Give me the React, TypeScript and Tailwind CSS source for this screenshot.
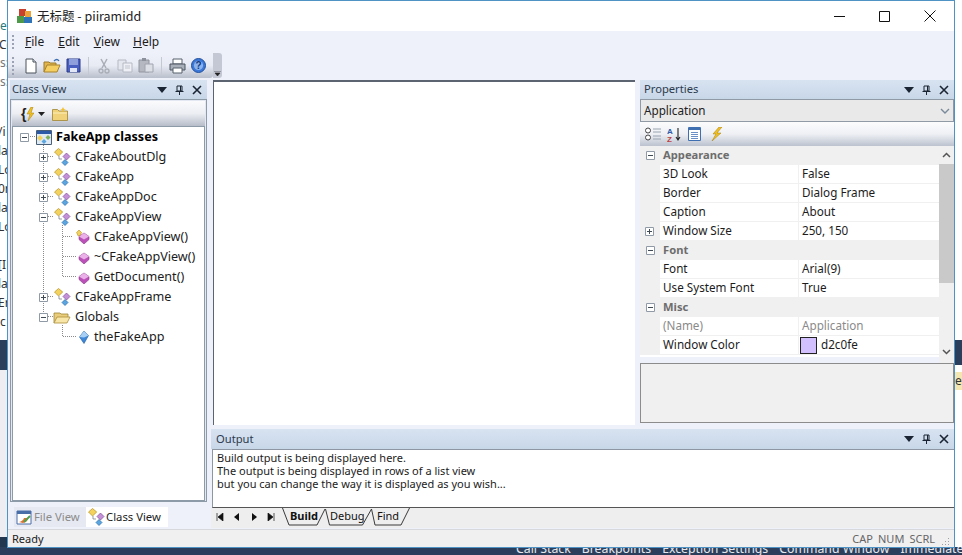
import React from "react";

const font = { fontFamily: '"Noto Sans","Noto Sans CJK SC",sans-serif' };

const CaptionButtons = () => (
  <div className="flex items-center gap-[7px] text-[#1f2d44]">
    <svg width="10" height="6" viewBox="0 0 10 6"><path d="M0 0h10L5 6z" fill="#1a2433" /></svg>
    <svg width="9" height="10" viewBox="0 0 9 10" className="ml-[1px]"><path d="M2 1h5v5H2zM0.5 6.5h8M4.5 6.5V10M5.500 1v5" fill="none" stroke="#1a2433" /></svg>
    <svg width="10" height="10" viewBox="0 0 10 10" className="ml-[1px]"><path d="M1 1l8 8M9 1l-8 8" stroke="#1a2433" strokeWidth="1.6" /></svg>
  </div>
);

const Caption = ({ title, cls }: { title: string; cls?: string }) => (
  <div className={"flex h-[19px] items-center justify-between bg-gradient-to-b from-[#d8e3f1] to-[#c8d7e8] pl-[2px] pr-[5px] text-[11.2px] text-[#2c3a4d] " + (cls ?? "")}>
    <span>{title}</span>
    <CaptionButtons />
  </div>
);

const Grip = ({ n }: { n: number }) => (
  <div className="flex w-[3px] shrink-0 flex-col gap-[2px]">
    {Array.from({ length: n }).map((_, i) => (
      <span key={i} className="h-[2px] w-[2px] bg-[#9aa2b4]" />
    ))}
  </div>
);

const Doc = () => (
  <svg width="16" height="16" viewBox="0 0 16 16"><path d="M3 1h7l3 3v11H3z" fill="#fff" stroke="#4a525c" /><path d="M10 1v3h3" fill="#dfe6ee" stroke="#4a525c" /></svg>
);
const OpenF = () => (
  <svg width="18" height="16" viewBox="0 0 18 16"><path d="M1 14V4h5l1 1h6v2" fill="#e2b64c" stroke="#9a7a2a" /><path d="M1 14l3-7h13l-3 7z" fill="#f6cf62" stroke="#a8832c" /><path d="M11 3q3-3 5 0" fill="none" stroke="#3f6fb0" strokeWidth="1.3" /></svg>
);
const Save = () => (
  <svg width="15" height="15" viewBox="0 0 15 15"><path d="M1 1h13v13H1z" fill="#4a5fc0" stroke="#2b3a86" /><path d="M3 1h9v6H3z" fill="#8f9fdc" /><path d="M4 10h7v4H4z" fill="#e3e7f5" /></svg>
);
const Cut = () => (
  <svg width="12" height="16" viewBox="0 0 12 16"><path d="M3 1l5 9M9 1l-5 9" stroke="#a9adb6" strokeWidth="1.5" /><circle cx="3" cy="13" r="2" fill="none" stroke="#a9adb6" strokeWidth="1.3" /><circle cx="9" cy="13" r="2" fill="none" stroke="#a9adb6" strokeWidth="1.3" /></svg>
);
const Copy = () => (
  <svg width="16" height="14" viewBox="0 0 16 14"><path d="M1 1h8v10H1z" fill="#e4e7ee" stroke="#b5b9c3" /><path d="M6 4h9v9H6z" fill="#eef0f5" stroke="#b5b9c3" /><path d="M8 7h5M8 9h5" stroke="#c0c4cc" /></svg>
);
const Paste = () => (
  <svg width="16" height="15" viewBox="0 0 16 15"><path d="M1 2h10v12H1z" fill="#b5b8c0" stroke="#90949e" /><path d="M4 0h4v3H4z" fill="#8d919b" /><path d="M7 6h8v8H7z" fill="#dcdfe6" stroke="#a0a4ae" /></svg>
);
const Print = () => (
  <svg width="17" height="16" viewBox="0 0 17 16"><path d="M4 1h9v5H4z" fill="#fff" stroke="#56606c" /><path d="M1 6h15v6H1z" fill="#a8afb9" stroke="#4c5560" /><path d="M4 10h9v5H4z" fill="#fff" stroke="#56606c" /></svg>
);
const Help = () => (
  <svg width="15" height="15" viewBox="0 0 15 15"><circle cx="7.5" cy="7.5" r="7" fill="#3c78d8" stroke="#20509e" /><circle cx="7.5" cy="7.5" r="4.6" fill="#8ab4ee" /><text x="7.5" y="11" textAnchor="middle" fontSize="10" fontWeight="700" fill="#123a80" fontFamily="Liberation Sans">?</text></svg>
);

const Sep = () => <div className="mx-[5px] h-[18px] w-px bg-[#c5c9d4]" />;

const Box = ({ open }: { open?: boolean }) => (
  <svg width="9" height="9" viewBox="0 0 9 9" className="shrink-0 bg-white">
    <path d="M.5.5h8v8h-8z" fill="#fff" stroke="#8f9aa6" />
    <path d={open ? "M2 4.5h5" : "M2 4.5h5M4.500 2v5"} stroke="#404a55" />
  </svg>
);

const ClassIcon = () => (
  <svg width="17" height="18" viewBox="0 0 17 18" className="shrink-0">
    <path d="M4.500 0.500l4.200 3.500-4.200 4L0.500 4z" fill="#f3d25e" stroke="#b58f20" strokeWidth=".7" />
    <path d="M12.500 5l3.500 3.500-3.500 3.500L9 8.500z" fill="#c490d8" stroke="#7f4f99" strokeWidth=".7" />
    <path d="M11 11.500l3 3-3 3-3-3z" fill="#5aa6e0" stroke="#2c6aa6" strokeWidth=".7" />
    <path d="M5 8v3h3" fill="none" stroke="#6a7480" strokeWidth=".7" />
  </svg>
);
const Method = ({ star }: { star?: boolean }) => (
  <svg width="14" height="14" viewBox="0 0 14 14" className="shrink-0">
    {star && <path d="M3 0l2.500 2.500L3.800 6H2.200L.600 2.500z" fill="#f3d25e" stroke="#b58f20" strokeWidth=".6" />}
    <path d="M8 3l5 3.500v3L8 14l-5-4.500v-3z" fill="#bb50b8" stroke="#8a3b88" strokeWidth=".6" />
    <path d="M8 3l5 3.500L8 9.500 3 6.500z" fill="#eab0e8" />
  </svg>
);
const Field = () => (
  <svg width="14" height="14" viewBox="0 0 14 14" className="shrink-0">
    <path d="M8 1l4.500 4.500L8 13.500 3.500 7z" fill="#3f88d8" stroke="#1c5a9e" strokeWidth=".6" />
    <path d="M8 1l4.500 4.500L8 7.500 3.500 7z" fill="#a8d0f4" />
  </svg>
);
const Folder = ({ w = 18 }: { w?: number }) => (
  <svg width={w} height="15" viewBox="0 0 18 15" className="shrink-0">
    <path d="M1 13V3h6l1 1h7v3" fill="#e9cd7c" stroke="#a08534" strokeWidth=".8" />
    <path d="M1 13l3-6h13l-3 6z" fill="#f8e6a8" stroke="#a98d3b" strokeWidth=".8" />
  </svg>
);
const ClosedFolder = () => (
  <svg width="16" height="14" viewBox="0 0 16 14" className="shrink-0">
    <path d="M.500 13.500v-11h5l1.500 1.500h8.500v9.500z" fill="#f0d27a" stroke="#a08534" strokeWidth=".8" />
    <path d="M1 6h14" stroke="#fbeebb" />
    <path d="M11 0l1 2 2 .5-2 .5-1 2-1-2-2-.5 2-.5z" fill="#f3c030" />
  </svg>
);
const RootIcon = () => (
  <svg width="16" height="15" viewBox="0 0 16 15" className="shrink-0">
    <path d="M.500.500h15v14H.500z" fill="#dfe9f3" stroke="#4a6078" />
    <path d="M1 1h14v3H1z" fill="#2c5aa8" />
    <path d="M4 5l3 3-3 3-3-3z" fill="#f3d25e" />
    <path d="M12 5l2.500 2.500L12 10 9.500 7.500z" fill="#7fb05a" />
    <path d="M8 9l2.500 2.500L8 14l-2.500-2.500z" fill="#5aa6e0" />
  </svg>
);

type TreeRow = { indent: number; box?: "open" | "closed"; icon: React.ReactNode; label: string; bold?: boolean };
const rows: TreeRow[] = [
  { indent: 8, box: "open", icon: <RootIcon />, label: "FakeApp classes", bold: true },
  { indent: 27, box: "closed", icon: <ClassIcon />, label: "CFakeAboutDlg" },
  { indent: 27, box: "closed", icon: <ClassIcon />, label: "CFakeApp" },
  { indent: 27, box: "closed", icon: <ClassIcon />, label: "CFakeAppDoc" },
  { indent: 27, box: "open", icon: <ClassIcon />, label: "CFakeAppView" },
  { indent: 46, icon: <Method star />, label: "CFakeAppView()" },
  { indent: 46, icon: <Method />, label: "~CFakeAppView()" },
  { indent: 46, icon: <Method />, label: "GetDocument()" },
  { indent: 27, box: "closed", icon: <ClassIcon />, label: "CFakeAppFrame" },
  { indent: 27, box: "open", icon: <Folder />, label: "Globals" },
  { indent: 46, icon: <Field />, label: "theFakeApp" },
];

const Tree = () => (
  <div className="relative min-h-0 flex-1 border border-[#8d9aa8] bg-white text-[12.6px] text-[#1c1c1c]">
    <svg className="absolute left-0 top-0" width="80" height="240" fill="none" stroke="#8a8a8a" strokeDasharray="1 1">
      <path d="M30.500 18v172M49.500 98v52M49.500 198v12" />
      <path d="M17 9.500h6M35 29.500h6M35 49.500h6M35 69.500h6M35 89.500h6M50 109.500h10M50 129.500h13M50 149.500h13M35 169.500h6M35 189.500h6M50 209.500h13" />
    </svg>
    {rows.map((r) => (
      <div key={r.label} className="relative flex h-[20px] items-center">
        <div className="flex w-[9px] shrink-0 justify-center" style={{ marginLeft: r.indent - 1 }}>
          {r.box ? <Box open={r.box === "open"} /> : null}
        </div>
        <div className="ml-[6px] flex w-[17px] shrink-0 justify-end">{r.icon}</div>
        <span className={"ml-[4px] whitespace-nowrap " + (r.bold ? "font-bold text-black" : "")}>{r.label}</span>
      </div>
    ))}
  </div>
);

const Cat = ({ label }: { label: string }) => (
  <div className="flex h-[19px] items-center bg-[#f0f0f0]">
    <div className="flex w-[23px] shrink-0 justify-center pr-[3px]"><Box open /></div>
    <span className="text-[11.2px] font-bold text-[#6d6d6d]">{label}</span>
  </div>
);
const Prop = ({ n, v, dim, plus, swatch }: { n: string; v: string; dim?: boolean; plus?: boolean; swatch?: boolean }) => (
  <div className={"flex h-[19px] items-center " + (dim ? "text-[#8a8a8a]" : "text-[#1c1c1c]")}>
    <div className="flex h-full w-[20px] shrink-0 items-center justify-center bg-[#f0f0f0] pr-[2px]">{plus && <Box />}</div>
    <div className="flex h-full w-[139px] shrink-0 items-center border-b border-r border-[#f0f0f0] pl-[3px]">{n}</div>
    <div className="flex h-full flex-1 items-center border-b border-[#f0f0f0] pl-[3px]">
      {swatch && <span className="-ml-[2px] mr-[4px] h-[17px] w-[17px] border border-[#222] bg-[#d2c0fe]" />}
      {v}
    </div>
  </div>
);

const Properties = () => (
  <div className="flex w-[314px] shrink-0 flex-col">
    <Caption title="Properties" cls="pl-[4px] pr-[4px]" />
    <div className="flex h-[23px] items-center justify-between border border-[#8f9aa6] bg-[#e9e9e9] px-[3px] text-[11.7px] text-[#222]">
      <span>Application</span>
      <svg width="10" height="6" viewBox="0 0 10 6"><path d="M1 1l4 4 4-4" fill="none" stroke="#7a8a9a" strokeWidth="1.4" /></svg>
    </div>
    <div className="flex h-[24px] items-center gap-[6px] bg-gradient-to-b from-[#fcfcfd] via-[#eef0f4] to-[#bcc3cf] pl-[5px]">
      <svg width="17" height="14" viewBox="0 0 17 14"><circle cx="3" cy="3.500" r="2.500" fill="#fff" stroke="#444" /><circle cx="3" cy="10.500" r="2.500" fill="#fff" stroke="#444" /><path d="M8 2h8M8 5h8M8 9h8M8 12h8" stroke="#9aa4b0" /></svg>
      <svg width="15" height="15" viewBox="0 0 15 15" className="-ml-[1px]"><text x="0" y="7" fontSize="8" fontWeight="700" fill="#2c5aa8" fontFamily="Liberation Sans">A</text><text x="0" y="14.500" fontSize="8" fontWeight="700" fill="#c04040" fontFamily="Liberation Sans">Z</text><path d="M11 1v12M9 10l2 3 2-3" fill="none" stroke="#222" strokeWidth="1.1" /></svg>
      <svg width="13" height="14" viewBox="0 0 13 14"><path d="M.500.500h12v13H.500z" fill="#fff" stroke="#3f6fb0" /><path d="M1 1h11v2H1z" fill="#3f6fb0" /><path d="M3 5.500h7M3 7.500h7M3 9.500h7M3 11.500h7" stroke="#6a90c8" /></svg>
      <svg width="12" height="14" viewBox="0 0 12 14" className="ml-[4px]"><path d="M8 0L2 7h3l-4 7 9-8H6l5-6z" fill="#f0c020" stroke="#a67c10" strokeWidth=".5" /></svg>
    </div>
    <div className="flex h-[217px] text-[11.7px]">
      <div className="h-[211px] flex-1 overflow-hidden bg-white">
        <Cat label="Appearance" />
        <Prop n="3D Look" v="False" />
        <Prop n="Border" v="Dialog Frame" />
        <Prop n="Caption" v="About" />
        <Prop n="Window Size" v="250, 150" plus />
        <Cat label="Font" />
        <Prop n="Font" v="Arial(9)" />
        <Prop n="Use System Font" v="True" />
        <Cat label="Misc" />
        <Prop n="(Name)" v="Application" dim />
        <Prop n="Window Color" v="d2c0fe" swatch />
      </div>
      <div className="flex w-[15px] shrink-0 flex-col items-center bg-[#f0f0f0]">
        <div className="flex h-[18px] items-center">
          <svg width="9" height="6" viewBox="0 0 9 6"><path d="M1 5l3.500-3.500L8 5" fill="none" stroke="#555" strokeWidth="1.500" /></svg>
        </div>
        <div className="h-[119px] w-full bg-[#c9c9c9]" />
        <div className="flex-1" />
        <div className="flex h-[14px] items-start">
          <svg width="9" height="6" viewBox="0 0 9 6"><path d="M1 1l3.500 3.500L8 1" fill="none" stroke="#555" strokeWidth="1.500" /></svg>
        </div>
      </div>
    </div>
    <div className="h-[60px] border border-[#8c8c8c] bg-[#f0f0f0]" />
  </div>
);

const OutputTabs = () => (
  <div className="relative flex h-[20px] items-center pb-[3px] pl-[5px] text-[11px] text-[#111]">
    <svg className="absolute left-[71px] top-0" width="130" height="19" fill="none" stroke="#3a3a3a">
      <path d="M.500 0l6.500 17h28l8-16" />
      <path d="M43.500 1l4 16h33l9-16" />
      <path d="M89.500 1l3.500 16h26l8.500-17" />
    </svg>
    <div className="flex w-[69px] items-center gap-[9px]">
      <svg width="8" height="8" viewBox="0 0 8 8"><path d="M1 0v8M7 0v8L2 4z" fill="#111" stroke="#111" strokeWidth=".7" /></svg>
      <svg width="8" height="8" viewBox="0 0 8 8"><path d="M6 0v8L1 4z" fill="#111" /></svg>
      <svg width="8" height="8" viewBox="0 0 8 8"><path d="M2 0v8l5-4z" fill="#111" /></svg>
      <svg width="8" height="8" viewBox="0 0 8 8"><path d="M7 0v8M1 0v8l5-4z" fill="#111" stroke="#111" strokeWidth=".7" /></svg>
    </div>
    <span className="relative ml-[5px] w-[40px] font-bold">Build</span>
    <span className="relative w-[47px]">Debug</span>
    <span className="relative">Find</span>
  </div>
);

export default function App() {
  return (
    <div className="relative h-[555px] w-[962px] overflow-hidden bg-white" style={font}>
      {/* desktop behind the window */}
      <div className="absolute left-0 top-0 h-[555px] w-[7px] overflow-hidden text-[12px] leading-[19px] text-[#333]">
        <div className="absolute left-0 top-[16px] text-[#2a7a7a]">e</div>
        <div className="absolute -left-[1px] top-[35px]">C(</div>
        <div className="absolute left-0 top-[53px] text-[#777]">s:</div>
        <div className="absolute left-0 top-[72px] text-[#777]">s:</div>
        <div className="absolute -left-[2px] top-[122px]">/i</div>
        <div className="absolute -left-[2px] top-[141px]">la</div>
        <div className="absolute -left-[2px] top-[160px]">Lo</div>
        <div className="absolute -left-[2px] top-[179px]">0r</div>
        <div className="absolute -left-[2px] top-[198px]">la</div>
        <div className="absolute -left-[2px] top-[217px]">Lo</div>
        <div className="absolute -left-[2px] top-[255px]">[I</div>
        <div className="absolute -left-[2px] top-[274px]">la</div>
        <div className="absolute -left-[2px] top-[293px]">Er</div>
        <div className="absolute left-0 top-[312px]">c</div>
        <div className="absolute left-0 top-[340px] h-[30px] w-full bg-[#2b3f5c]" />
        <div className="absolute left-0 top-[370px] h-[185px] w-full bg-[#eeeef2]" />
        <div className="absolute left-0 top-[537px] h-[18px] w-full bg-[#23374f]" />
      </div>
      <div className="absolute right-0 top-[340px] h-[25px] w-[7px] bg-[#2b3f5c]" />
      <div className="absolute right-0 top-[372px] h-[18px] w-[7px] overflow-hidden bg-[#f3e6b0] text-[12px] leading-[18px] text-[#333]">es</div>
      <div className="absolute left-0 top-[547px] flex h-[8px] w-[962px] items-center gap-[11px] overflow-hidden bg-[#2b3f5c] pl-[516px] text-[12.300px] leading-[8px] text-[#e4e8ee]">
        <span className="-mt-[5px] whitespace-nowrap">Call Stack</span>
        <span className="-mt-[5px] whitespace-nowrap">Breakpoints</span>
        <span className="-mt-[5px] whitespace-nowrap">Exception Settings</span>
        <span className="-mt-[5px] whitespace-nowrap">Command Window</span>
        <span className="-mt-[5px] whitespace-nowrap">Immediate</span>
      </div>

      {/* window */}
      <div className="relative ml-[7px] flex h-[548px] w-[948px] flex-col border border-[#4f92c4] bg-[#eef1fa]">
        {/* title */}
        <div className="flex h-[30px] shrink-0 items-center bg-white pl-[8px] text-[#222]">
          <svg width="17" height="16" viewBox="0 0 17 16">
            <path d="M3 1h7v7H3z" fill="#c8402e" />
            <path d="M9 3h6v6H9z" fill="#e8a33a" />
            <path d="M1 8h7v7H1z" fill="#4f9a4a" />
            <path d="M8 9h8v6H8z" fill="#2f73b8" />
          </svg>
          <span className="ml-[4px] text-[12.500px]" style={{ fontFamily: '"Noto Sans CJK SC","Noto Sans",sans-serif' }}>无标题 - piiramidd</span>
          <div className="flex-1" />
          <div className="flex items-center gap-[34px] pr-[18px]">
            <svg width="11" height="11" viewBox="0 0 11 11"><path d="M0 5.500h11" stroke="#111" /></svg>
            <svg width="11" height="11" viewBox="0 0 11 11"><path d="M.500.500h10v10H.500z" fill="none" stroke="#111" /></svg>
            <svg width="12" height="12" viewBox="0 0 12 12"><path d="M.500.500l11 11M11.500.500l-11 11" stroke="#111" /></svg>
          </div>
        </div>
        {/* menu */}
        <div className="flex h-[22px] shrink-0 items-center pl-[4px] text-[12px] text-[#1c1c1c]">
          <Grip n={4} />
          <span className="ml-[10px] mr-[14px]"><u>F</u>ile</span>
          <span className="mr-[14px]"><u>E</u>dit</span>
          <span className="mr-[13px]"><u>V</u>iew</span>
          <span><u>H</u>elp</span>
        </div>
        {/* toolbar */}
        <div className="flex h-[25px] shrink-0 items-center">
          <div className="flex h-[25px] w-[205px] items-center rounded-br-[3px] bg-gradient-to-b from-[#eef1fa] via-[#e8ebf4] to-[#b9bfcc] pl-[4px]">
            <Grip n={5} />
            <div className="ml-[6px] flex w-[20px] justify-center"><Doc /></div>
            <div className="ml-[1px] flex w-[20px] justify-center"><OpenF /></div>
            <div className="ml-[1px] flex w-[20px] justify-center"><Save /></div>
            <Sep />
            <div className="flex w-[20px] justify-center"><Cut /></div>
            <div className="ml-[1px] flex w-[20px] justify-center"><Copy /></div>
            <div className="ml-[1px] flex w-[20px] justify-center"><Paste /></div>
            <Sep />
            <div className="flex w-[20px] justify-center"><Print /></div>
            <div className="ml-[1px] flex w-[20px] justify-center"><Help /></div>
          </div>
          <div className="flex h-[25px] w-[9px] items-end justify-center rounded-r-[3px] bg-[#c3c8d4] pb-[2px]">
            <svg width="7" height="5" viewBox="0 0 7 5"><path d="M0 0h7M1 2h5L3.500 5z" fill="#222" stroke="#222" strokeWidth=".6" /></svg>
          </div>
        </div>
        {/* body */}
        <div className="flex min-h-0 flex-1 pt-[2px]">
          {/* left */}
          <div className="ml-[2px] flex w-[197px] shrink-0 flex-col">
            <Caption title="Class View" />
            <div className="flex min-h-0 flex-1 flex-col border border-[#8d9aa8] bg-[#e3e8f2] px-[1px] pt-[1px]">
              <div className="flex h-[25px] shrink-0 items-center bg-gradient-to-b from-[#fbfbfd] via-[#eceef3] to-[#b7bdc9] pl-[9px]">
                <span className="relative text-[14px] font-bold leading-none text-[#222]" style={{ fontFamily: "Liberation Sans" }}>{"{"}</span>
                <svg width="8" height="14" viewBox="0 0 8 14"><path d="M5 0L1 7h3L2 14l6-8H5l2-6z" fill="#f0c020" stroke="#a67c10" strokeWidth=".5" /></svg>
                <svg width="7" height="4" viewBox="0 0 7 4" className="ml-[4px]"><path d="M0 0h7L3.500 4z" fill="#222" /></svg>
                <span className="ml-[7px]"><ClosedFolder /></span>
              </div>
              <Tree />
            </div>
            <div className="flex h-[27px] shrink-0 items-start pl-[4px] pt-[5px] text-[11.300px]">
              <div className="flex h-[20px] w-[72px] items-center gap-[2px] bg-[#e6e9f2] pl-[2px] text-[#8b8b8b]">
                <svg width="16" height="15" viewBox="0 0 16 15"><path d="M1 1h14v13H1z" fill="#fff" stroke="#4a6fa8" /><path d="M1 1h14v3H1z" fill="#4a6fa8" /><path d="M3 12q4-1 5-4l4 0q0 4-5 5z" fill="#e07030" /><path d="M8 12l6-6" stroke="#50a050" strokeWidth="2" /></svg>
                File View
              </div>
              <div className="flex h-[20px] w-[82px] items-center gap-[1px] bg-white pl-[2px] text-[#222]">
                <ClassIcon />
                Class View
              </div>
            </div>
          </div>
          {/* right */}
          <div className="ml-[4px] flex min-w-0 flex-1 flex-col">
            <div className="flex h-[345px] shrink-0">
              <div className="ml-[2px] mr-[5px] flex-1 border-t-2 border-l border-[#5b6470] bg-white" />
              <Properties />
            </div>
            <div className="mt-[4px] flex min-h-0 flex-1 flex-col">
              <Caption title="Output" cls="h-[20px] pl-[5px] pr-[4px]" />
              <div className="ml-[1px] h-[59px] shrink-0 border border-[#8d96a2] border-b-[#555] border-r-0 bg-white pl-[4px] pt-[1px] text-[11px] leading-[13px] text-[#1c1c1c]">
                <div>Build output is being displayed here.</div>
                <div>The output is being displayed in rows of a list view</div>
                <div>but you can change the way it is displayed as you wish...</div>
              </div>
              <div className="bg-[#eeeeee]"><OutputTabs /></div>
            </div>
          </div>
        </div>
        {/* status */}
        <div className="flex h-[18px] shrink-0 items-center border-t border-[#d6d8dc] bg-[#f0f0f0] pl-[4px] pt-[1px] text-[11px] text-[#222]">
          <span>Ready</span>
          <div className="flex-1" />
          <div className="flex items-center gap-[5px] pr-[4px] text-[#666]">
            <span>CAP</span>
            <span>NUM</span>
            <span>SCRL</span>
            <svg width="8" height="8" viewBox="0 0 8 8" className="ml-[2px] mt-[4px]"><path d="M6 1h1v1H6zM3 4h1v1H3zM6 4h1v1H6zM0 7h1v1H0zM3 7h1v1H3zM6 7h1v1H6z" fill="#9aa0a8" /></svg>
          </div>
        </div>
      </div>
    </div>
  );
}
